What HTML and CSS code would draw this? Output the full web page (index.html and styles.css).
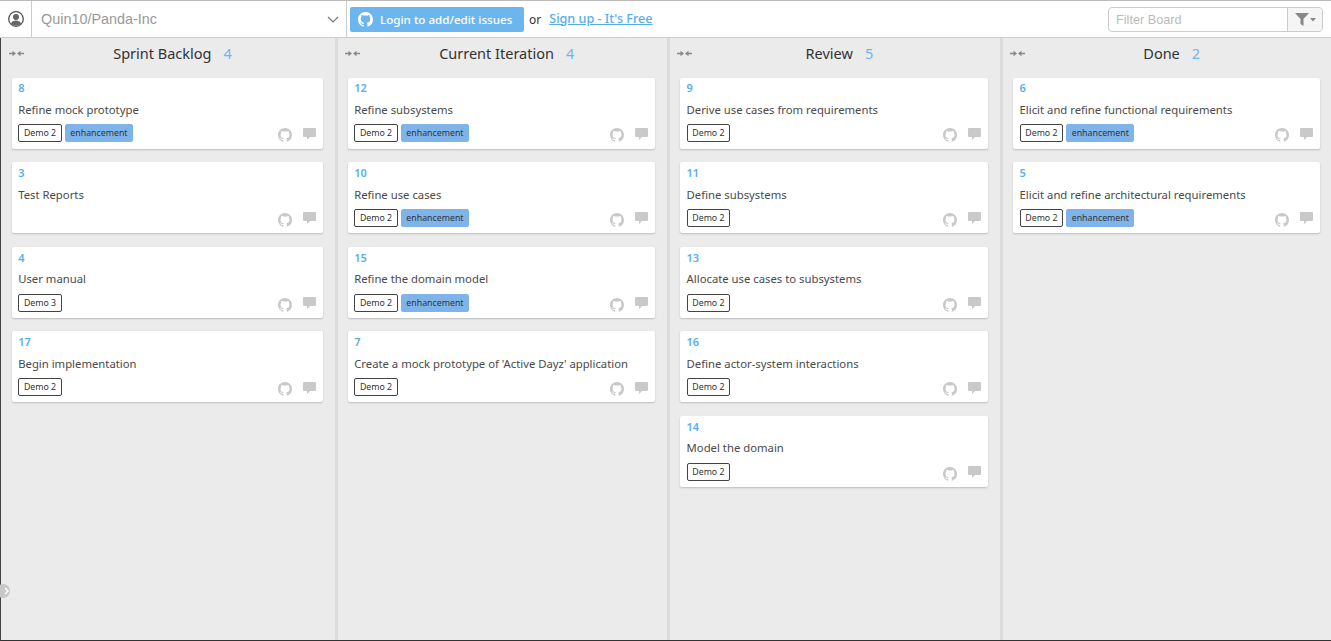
FILE: index.html
```html
<!DOCTYPE html>
<html lang="en">
<head>
  <meta charset="UTF-8" />
  <title>Quin10/Panda-Inc</title>
  <link rel="stylesheet" href="styles.css">
</head>
<body>
  <svg class="defs" width="0" height="0">
    <symbol id="gh" viewBox="0 0 16 16"><path d="M8 0C3.58 0 0 3.58 0 8c0 3.54 2.29 6.53 5.47 7.59.4.07.55-.17.55-.38 0-.19-.01-.82-.01-1.49-2.01.37-2.53-.49-2.69-.94-.09-.23-.48-.94-.82-1.13-.28-.15-.68-.52-.01-.53.63-.01 1.08.58 1.23.82.72 1.21 1.87.87 2.33.66.07-.52.28-.87.51-1.07-1.78-.2-3.64-.89-3.64-3.95 0-.87.31-1.59.82-2.15-.08-.2-.36-1.02.08-2.12 0 0 .67-.21 2.2.82.64-.18 1.32-.27 2-.27.68 0 1.36.09 2 .27 1.53-1.04 2.2-.82 2.2-.82.44 1.1.16 1.92.08 2.12.51.56.82 1.27.82 2.15 0 3.07-1.87 3.75-3.65 3.95.29.25.54.73.54 1.48 0 1.07-.01 1.93-.01 2.2 0 .21.15.46.55.38A8.013 8.013 0 0016 8c0-4.42-3.58-8-8-8z"/></symbol>
    <symbol id="comment" viewBox="0 0 13 12"><path d="M1 0h11a1 1 0 0 1 1 1v7a1 1 0 0 1-1 1H7l-3 3V9H1a1 1 0 0 1-1-1V1a1 1 0 0 1 1-1z"/></symbol>
    <symbol id="collapse" viewBox="0 0 15 7"><path d="M0 2.700h3.500V.8L7 3.500 3.500 6.200V4.300H0zM15 2.700h-3.500V.8L8 3.500l3.500 2.700V4.300H15z"/></symbol>
  </svg>

  <header class="topbar">
    <div class="avatar">
      <svg width="16" height="16" viewBox="0 0 16 16"><circle cx="8" cy="8" r="7.3" fill="none" stroke="#555" stroke-width="1.3"/><circle cx="8" cy="6" r="3" fill="#666"/><path d="M3 12.6c.8-2.2 2.8-3 5-3s4.2.8 5 3a6.8 6.8 0 0 1-10 0z" fill="#666"/></svg>
    </div>
    <div class="repo">
      <span>Quin10/Panda-Inc</span>
      <svg width="12" height="7" viewBox="0 0 12 7"><path d="M1 1l5 5 5-5" fill="none" stroke="#777" stroke-width="1.2"/></svg>
    </div>
    <a class="login">
      <svg width="15" height="15"><use href="#gh"/></svg>
      Login to add/edit issues
    </a>
    <span class="or">or</span>
    <a class="signup">Sign up - It's Free</a>
    <div class="filter">
      <span class="filter-input">Filter Board</span>
      <span class="filter-btn">
        <svg width="21" height="13" viewBox="0 0 21 13"><path d="M0 0h14L8.500 6v7L5.500 11V6z" fill="#888"/><path d="M15 5h6l-3 3.500z" fill="#888"/></svg>
      </span>
    </div>
  </header>

  <main class="board">
    <section class="col col-first">
      <div class="col-head">
        <svg class="collapse" width="15" height="7"><use href="#collapse"/></svg>
        <span class="col-title">Sprint Backlog</span><span class="col-count">4</span>
      </div>
      <article class="card">
        <div class="num">8</div>
        <div class="title">Refine mock prototype</div>
        <div class="foot">
          <span class="tag">Demo 2</span><span class="tag tag-blue">enhancement</span>
          <svg class="ico-gh"><use href="#gh"/></svg><svg class="ico-c"><use href="#comment"/></svg>
        </div>
      </article>
      <article class="card">
        <div class="num">3</div>
        <div class="title">Test Reports</div>
        <div class="foot">
          <svg class="ico-gh"><use href="#gh"/></svg><svg class="ico-c"><use href="#comment"/></svg>
        </div>
      </article>
      <article class="card">
        <div class="num">4</div>
        <div class="title">User manual</div>
        <div class="foot">
          <span class="tag">Demo 3</span>
          <svg class="ico-gh"><use href="#gh"/></svg><svg class="ico-c"><use href="#comment"/></svg>
        </div>
      </article>
      <article class="card">
        <div class="num">17</div>
        <div class="title">Begin implementation</div>
        <div class="foot">
          <span class="tag">Demo 2</span>
          <svg class="ico-gh"><use href="#gh"/></svg><svg class="ico-c"><use href="#comment"/></svg>
        </div>
      </article>
    </section>

    <section class="col">
      <div class="col-head">
        <svg class="collapse" width="15" height="7"><use href="#collapse"/></svg>
        <span class="col-title">Current Iteration</span><span class="col-count">4</span>
      </div>
      <article class="card">
        <div class="num">12</div>
        <div class="title">Refine subsystems</div>
        <div class="foot">
          <span class="tag">Demo 2</span><span class="tag tag-blue">enhancement</span>
          <svg class="ico-gh"><use href="#gh"/></svg><svg class="ico-c"><use href="#comment"/></svg>
        </div>
      </article>
      <article class="card">
        <div class="num">10</div>
        <div class="title">Refine use cases</div>
        <div class="foot">
          <span class="tag">Demo 2</span><span class="tag tag-blue">enhancement</span>
          <svg class="ico-gh"><use href="#gh"/></svg><svg class="ico-c"><use href="#comment"/></svg>
        </div>
      </article>
      <article class="card">
        <div class="num">15</div>
        <div class="title">Refine the domain model</div>
        <div class="foot">
          <span class="tag">Demo 2</span><span class="tag tag-blue">enhancement</span>
          <svg class="ico-gh"><use href="#gh"/></svg><svg class="ico-c"><use href="#comment"/></svg>
        </div>
      </article>
      <article class="card">
        <div class="num">7</div>
        <div class="title">Create a mock prototype of 'Active Dayz' application</div>
        <div class="foot">
          <span class="tag">Demo 2</span>
          <svg class="ico-gh"><use href="#gh"/></svg><svg class="ico-c"><use href="#comment"/></svg>
        </div>
      </article>
    </section>

    <section class="col">
      <div class="col-head">
        <svg class="collapse" width="15" height="7"><use href="#collapse"/></svg>
        <span class="col-title">Review</span><span class="col-count">5</span>
      </div>
      <article class="card">
        <div class="num">9</div>
        <div class="title">Derive use cases from requirements</div>
        <div class="foot">
          <span class="tag">Demo 2</span>
          <svg class="ico-gh"><use href="#gh"/></svg><svg class="ico-c"><use href="#comment"/></svg>
        </div>
      </article>
      <article class="card">
        <div class="num">11</div>
        <div class="title">Define subsystems</div>
        <div class="foot">
          <span class="tag">Demo 2</span>
          <svg class="ico-gh"><use href="#gh"/></svg><svg class="ico-c"><use href="#comment"/></svg>
        </div>
      </article>
      <article class="card">
        <div class="num">13</div>
        <div class="title">Allocate use cases to subsystems</div>
        <div class="foot">
          <span class="tag">Demo 2</span>
          <svg class="ico-gh"><use href="#gh"/></svg><svg class="ico-c"><use href="#comment"/></svg>
        </div>
      </article>
      <article class="card">
        <div class="num">16</div>
        <div class="title">Define actor-system interactions</div>
        <div class="foot">
          <span class="tag">Demo 2</span>
          <svg class="ico-gh"><use href="#gh"/></svg><svg class="ico-c"><use href="#comment"/></svg>
        </div>
      </article>
      <article class="card">
        <div class="num">14</div>
        <div class="title">Model the domain</div>
        <div class="foot">
          <span class="tag">Demo 2</span>
          <svg class="ico-gh"><use href="#gh"/></svg><svg class="ico-c"><use href="#comment"/></svg>
        </div>
      </article>
    </section>

    <section class="col col-last">
      <div class="col-head">
        <svg class="collapse" width="15" height="7"><use href="#collapse"/></svg>
        <span class="col-title">Done</span><span class="col-count">2</span>
      </div>
      <article class="card">
        <div class="num">6</div>
        <div class="title">Elicit and refine functional requirements</div>
        <div class="foot">
          <span class="tag">Demo 2</span><span class="tag tag-blue">enhancement</span>
          <svg class="ico-gh"><use href="#gh"/></svg><svg class="ico-c"><use href="#comment"/></svg>
        </div>
      </article>
      <article class="card">
        <div class="num">5</div>
        <div class="title">Elicit and refine architectural requirements</div>
        <div class="foot">
          <span class="tag">Demo 2</span><span class="tag tag-blue">enhancement</span>
          <svg class="ico-gh"><use href="#gh"/></svg><svg class="ico-c"><use href="#comment"/></svg>
        </div>
      </article>
    </section>

    <div class="side-toggle">
      <svg width="5" height="8" viewBox="0 0 5 8"><path d="M1 1l3 3-3 3" fill="none" stroke="#fff" stroke-width="1.500"/></svg>
    </div>
  </main>
</body>
</html>
```

FILE: styles.css
```css
html, body {
  height: 100%;
}

body {
  margin: 0;
  overflow: hidden;
  font-family: "Noto Sans", sans-serif;
  font-size: 11.3px;
  color: #444;
  background: #fff;
  display: flex;
  flex-direction: column;
}

.defs {
  position: absolute;
}

/* top bar */
.topbar {
  flex: none;
  height: 36px;
  display: flex;
  align-items: center;
  border-top: 1px solid #bbb;
  border-bottom: 1px solid #ccc;
}

.avatar {
  width: 31px;
  height: 36px;
  display: flex;
  align-items: center;
  justify-content: center;
  border-right: 1px solid #ccc;
}

.repo {
  width: 315px;
  height: 36px;
  padding: 0 7px 0 9px;
  box-sizing: border-box;
  display: flex;
  align-items: center;
  justify-content: space-between;
  border-right: 1px solid #ccc;
  font-family: "Liberation Sans", sans-serif;
  font-size: 14.4px;
  color: #999;
}

.login {
  margin-left: 3px;
  width: 174px;
  height: 25px;
  box-sizing: border-box;
  padding-left: 8px;
  display: flex;
  align-items: center;
  gap: 7px;
  background: #6bb6ef;
  border-radius: 2px;
  color: #fff;
  font-weight: 500;
  font-size: 11.6px;
}

.login svg {
  fill: #fff;
}

.or {
  margin-left: 5px;
  font-size: 12px;
  color: #333;
}

.signup {
  margin-left: 8px;
  margin-top: -2px;
  font-size: 12.6px;
  color: #58aee9;
  font-weight: 500;
  text-decoration: underline;
}

.filter {
  margin-left: auto;
  margin-right: 8px;
  display: flex;
  height: 25px;
  box-sizing: border-box;
  border: 1px solid #ccc;
  border-radius: 4px;
}

.filter-input {
  width: 171px;
  padding-left: 7px;
  line-height: 24px;
  color: #bbb;
  font-family: "Liberation Sans", sans-serif;
  font-size: 12.7px;
  border-right: 1px solid #ccc;
}

.filter-btn {
  width: 34px;
  display: flex;
  align-items: center;
  justify-content: center;
  background: #f5f5f5;
  border-radius: 0 4px 4px 0;
}

/* board */
.board {
  position: relative;
  flex: 1;
  min-height: 0;
  display: grid;
  grid-template-columns: 334px 329.400px 330px 1fr;
  gap: 3px;
  background: #dcdcdc;
  border-left: 1px solid #444;
  border-bottom: 1px solid #333;
}

.col {
  background: #ebebeb;
  padding: 0 12px 0 10px;
}

.col-first {
  padding-left: 11px;
}

.col-last {
  padding-right: 11px;
}

.col-head {
  position: relative;
  height: 30px;
  margin-bottom: 9.600px;
  padding-left: 10px;
  display: flex;
  align-items: center;
  justify-content: center;
}

.collapse {
  position: absolute;
  left: -3px;
  top: 12px;
  fill: #888;
}

.col-title {
  font-size: 14.5px;
  color: #333;
}

.col-count {
  margin-left: 12px;
  font-size: 14.5px;
  color: #6bb6ef;
}

/* cards */
.card {
  height: 71px;
  box-sizing: border-box;
  margin-bottom: 13.600px;
  padding: 2.800px 7px 0 6.200px;
  background: #fff;
  border-radius: 2px;
  box-shadow: 0 1px 2px rgba(0,0,0,0.2);
}

.num {
  height: 15px;
  line-height: 15px;
  font-size: 11px;
  font-weight: 600;
  color: #58aee9;
}

.title {
  margin-top: 4.700px;
  height: 20px;
  line-height: 20px;
  color: #4a4a4a;
}

.foot {
  display: flex;
  align-items: center;
  gap: 3px;
  height: 18px;
  margin-top: 4.300px;
}

.tag {
  height: 18px;
  box-sizing: border-box;
  padding: 0 4.700px;
  line-height: 16px;
  border: 1px solid #444;
  border-radius: 2px;
  font-size: 8.800px;
  color: #333;
  background: #fff;
}

.tag-blue {
  padding: 0 4.500px;
  background: #7fb4ea;
  border-color: #7fb4ea;
}

.ico-gh {
  width: 14px;
  height: 14px;
  margin-left: auto;
  margin-right: 8px;
  margin-top: 4px;
  fill: #c9c9c9;
}

.ico-c {
  width: 13px;
  height: 12px;
  margin-top: 1px;
  fill: #c9c9c9;
}

.side-toggle {
  position: absolute;
  left: -5px;
  top: 546px;
  width: 14px;
  height: 14px;
  display: flex;
  align-items: center;
  justify-content: flex-end;
  padding-right: 1px;
  box-sizing: border-box;
  border-radius: 50%;
  background: #c8c8c8;
}
```
